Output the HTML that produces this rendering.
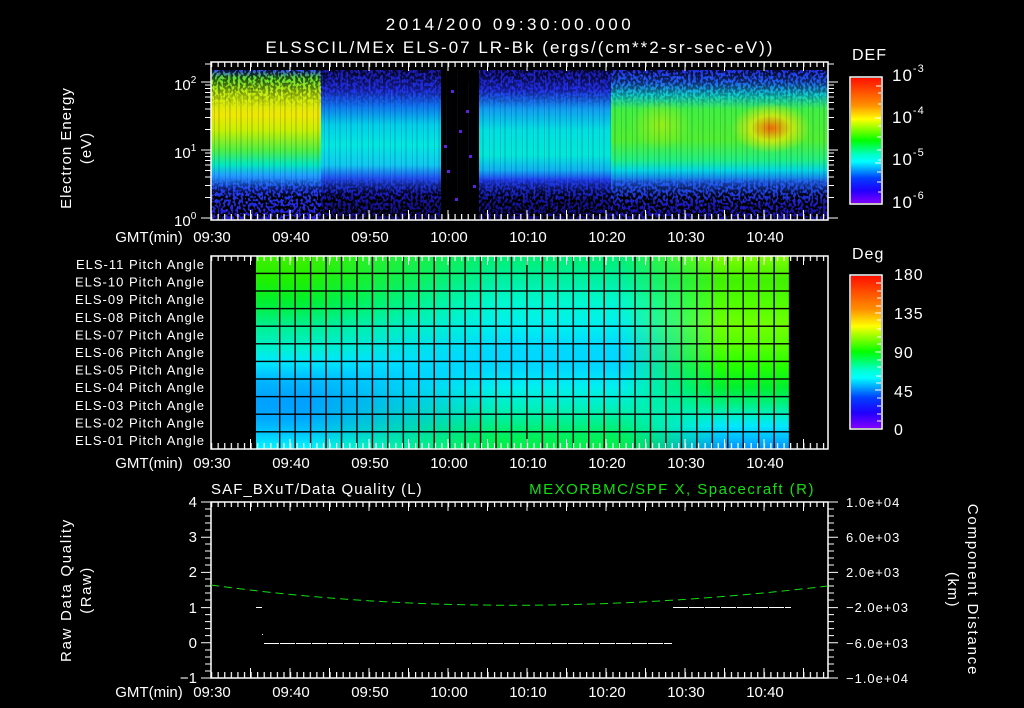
<!DOCTYPE html>
<html><head><meta charset="utf-8"><style>
html,body{margin:0;padding:0;background:#000;width:1024px;height:708px;overflow:hidden;position:relative}
.a{position:absolute}
#spec div{position:absolute;top:0;height:150px}
</style></head><body>

<div id="spec" class="a" style="left:211px;top:70px;width:617px;height:150px;overflow:hidden;background:#1a10b0">
  <div style="left:0;width:110px;background:linear-gradient(#3050ff 0px,#60e030 8px,#c0f010 22px,#f0e800 45px,#c8f000 60px,#50f040 80px,#00e8c0 95px,#20a0ff 105px,#2040f0 120px,#2418d8 150px)"></div>
  <div style="left:110px;width:120px;background:linear-gradient(#1818a8 0px,#2030e8 20px,#1070f0 35px,#00d0e8 55px,#00e8e0 75px,#10c8f0 95px,#2050f0 108px,#1818b0 125px,#100870 150px)"></div>
  <div style="left:230px;width:38px;background:#000"></div>
  <div style="left:268px;width:132px;background:linear-gradient(#1818b0 0px,#2030e8 20px,#10a0f0 40px,#00e0e0 60px,#00e8d8 85px,#10b0f0 100px,#2040f0 110px,#1414a0 130px,#100870 150px)"></div>
  <div style="left:400px;width:217px;background:linear-gradient(#2030e8 0px,#2060f0 12px,#10d0d0 25px,#40f040 40px,#50f030 70px,#20f080 90px,#00d8e0 100px,#2060f0 112px,#1c18c0 135px,#1810a0 150px)"></div>
  <div style="left:480px;width:120px;height:150px;background:radial-gradient(ellipse 40px 25px at 80px 58px,rgba(255,90,0,.9),rgba(250,230,0,.7) 50%,rgba(200,240,0,0) 100%)"></div>
  <div style="left:420px;width:60px;height:150px;background:radial-gradient(ellipse 30px 25px at 30px 55px,rgba(200,240,0,.6),rgba(200,240,0,0) 100%)"></div>
  <div style="left:0;width:617px;height:150px;background:repeating-linear-gradient(90deg,rgba(0,0,0,0) 0 3px,rgba(0,0,40,.15) 3px 4px,rgba(255,255,255,.04) 4px 5px,rgba(0,0,0,0) 5px 7px,rgba(0,0,60,.12) 7px 9px,rgba(0,0,0,0) 9px 11px)"></div>
</div>
<svg class="a" style="left:211px;top:70px" width="617" height="150">
  <filter id="n" x="0" y="0" width="100%" height="100%">
    <feTurbulence type="fractalNoise" baseFrequency="0.4 0.3" numOctaves="1" seed="4"/>
    <feColorMatrix type="matrix" values="0 0 0 0 0  0 0 0 0 0  0 0 0 0 0  0 0 0 -12 6.6"/>
  </filter>
  <linearGradient id="mk" x1="0" y1="0" x2="0" y2="1"><stop offset="0" stop-color="#fff" stop-opacity=".8"/><stop offset=".25" stop-color="#fff" stop-opacity="0"/><stop offset=".72" stop-color="#fff" stop-opacity="0"/><stop offset=".85" stop-color="#fff" stop-opacity="1"/></linearGradient>
  <mask id="m"><rect width="617" height="150" fill="url(#mk)"/></mask>
  <rect width="617" height="150" filter="url(#n)" mask="url(#m)"/>
  <g fill="#6020e0"><rect x="240" y="20" width="3" height="3"/><rect x="248" y="60" width="3" height="3"/><rect x="236" y="100" width="3" height="3"/><rect x="255" y="40" width="3" height="3"/><rect x="244" y="128" width="3" height="3"/><rect x="258" y="85" width="3" height="3"/><rect x="233" y="75" width="3" height="3"/><rect x="262" y="115" width="3" height="3"/></g>
</svg>

<div class="a" style="left:256px;top:256px;width:534px;height:193px;background:linear-gradient(#00f070 0%,#00f0a0 12%,#00f8d0 24%,#00f0f0 36%,#00d8ff 48%,#00d8ff 58%,#00f0f0 68%,#00f0c0 78%,#00f090 86%,#00f060 93%,#00f040 100%)"></div>
<div class="a" style="left:256px;top:256px;width:240px;height:193px;background:linear-gradient(#40f000 0%,#20f000 12%,#00f030 24%,#00f090 36%,#00f0d0 48%,#00e8ff 55%,#00b8ff 64%,#00a0ff 75%,#00a8ff 84%,#00c8ff 92%,#00f8ff 100%);-webkit-mask-image:linear-gradient(90deg,#000 20%,transparent 100%)"></div>
<div class="a" style="left:620px;top:256px;width:170px;height:193px;background:linear-gradient(#80ff00 0%,#40f000 12%,#50ff00 24%,#70ff00 36%,#50ff00 48%,#20ff00 58%,#00f030 68%,#00f070 75%,#00f0c0 82%,#00e8ff 88%,#00c0ff 94%,#0090ff 100%);-webkit-mask-image:linear-gradient(90deg,transparent 0%,#000 60%)"></div>
<svg class="a" style="left:0;top:0" width="1024" height="708">
  <defs>
    <pattern id="gv" x="279" y="0" width="15.45" height="708" patternUnits="userSpaceOnUse"><rect x="0" y="0" width="1.4" height="708" fill="#000"/></pattern>
    <pattern id="gh" x="0" y="272.7" width="1024" height="17.6" patternUnits="userSpaceOnUse"><rect x="0" y="0" width="1024" height="1.4" fill="#000"/></pattern>
  </defs>
  <rect x="279" y="256" width="511" height="193" fill="url(#gv)"/>
  <rect x="256" y="257" width="534" height="191" fill="url(#gh)"/>
</svg>

<svg class="a" style="left:0;top:0" width="1024" height="708" font-family="Liberation Sans, sans-serif" fill="#fff">
  <defs>
    <pattern id="tb" x="211" y="0" width="6.58" height="708" patternUnits="userSpaceOnUse"><rect x="0" y="0" width="1.2" height="708" fill="#fff"/></pattern>
  </defs>
  <text x="510" y="30" font-size="17" letter-spacing="3.5" text-anchor="middle">2014/200 09:30:00.000</text>
  <text x="520" y="53" font-size="17" letter-spacing="2" text-anchor="middle">ELSSCIL/MEx ELS-07 LR-Bk  (ergs/(cm**2-sr-sec-eV))</text>

  <g fill="none" stroke="#fff" stroke-width="1.5">
    <rect x="211" y="62" width="617" height="158"/>
    <rect x="211" y="256" width="617" height="193"/>
    <rect x="211" y="502" width="617" height="176"/>
    <rect x="850" y="77" width="32" height="127"/>
    <rect x="850" y="275" width="32" height="154"/>
  </g>
  <linearGradient id="cb" x1="0" y1="0" x2="0" y2="1"><stop offset="0" stop-color="#ff1000"/><stop offset=".22" stop-color="#ff9000"/><stop offset=".33" stop-color="#ffff00"/><stop offset=".5" stop-color="#00ff00"/><stop offset=".62" stop-color="#00ffd0"/><stop offset=".67" stop-color="#00ffff"/><stop offset=".8" stop-color="#0040ff"/><stop offset=".9" stop-color="#2000ff"/><stop offset="1" stop-color="#8000ff"/></linearGradient>
  <rect x="851" y="78" width="30" height="125" fill="url(#cb)"/>
  <rect x="851" y="276" width="30" height="152" fill="url(#cb)"/>
  <g stroke="#fff" stroke-width="1">
    <path d="M876 86h5M878 93h3M878 104h3M875 118h6M878 126h3M877 137h4M877 150h4M878 160h3M875 163h6M877 172h4M877 182h4M878 192h3"/>
    <path d="M876 283h5M877 291h4M877 298h4M876 306h5M875 313h6M877 320h4M877 329h4M877 337h4M877 344h4M875 352h6M877 360h4M877 367h4M876 376h5M876 383h5M875 390h6M877 398h4M877 406h4M877 414h4M877 421h4"/>
  </g>
  <text x="852" y="60" font-size="16" letter-spacing="1">DEF</text>
  <text x="892" y="81" font-size="17" letter-spacing="1">10<tspan font-size="11" dy="-9">-3</tspan></text>
  <text x="892" y="123" font-size="17" letter-spacing="1">10<tspan font-size="11" dy="-9">-4</tspan></text>
  <text x="892" y="165" font-size="17" letter-spacing="1">10<tspan font-size="11" dy="-9">-5</tspan></text>
  <text x="892" y="208" font-size="17" letter-spacing="1">10<tspan font-size="11" dy="-9">-6</tspan></text>
  <text x="852" y="259" font-size="16" letter-spacing="1">Deg</text>
  <g font-size="16" letter-spacing="1"><text x="894" y="280">180</text><text x="894" y="319">135</text><text x="894" y="358">90</text><text x="894" y="397">45</text><text x="894" y="435">0</text></g>

  <rect x="211" y="62" width="617" height="5" fill="url(#tb)"/>
  <rect x="211" y="214" width="617" height="6" fill="url(#tb)"/>
  <rect x="211" y="256" width="617" height="5" fill="url(#tb)"/>
  <rect x="211" y="443" width="617" height="6" fill="url(#tb)"/>
  <rect x="211" y="502" width="617" height="5" fill="url(#tb)"/>
  <rect x="211" y="672" width="617" height="6" fill="url(#tb)"/>
  <g stroke="#fff" stroke-width="1">
    <path d="M250.5 62v9M290 62v9M329.5 62v9M369 62v9M408.5 62v9M448 62v9M487.5 62v9M527 62v9M566.5 62v9M606 62v9M645.5 62v9M685 62v9M724.5 62v9M764 62v9M803.5 62v9"/>
    <path d="M250.5 220v-10M290 220v-10M329.5 220v-10M369 220v-10M408.5 220v-10M448 220v-10M487.5 220v-10M527 220v-10M566.5 220v-10M606 220v-10M645.5 220v-10M685 220v-10M724.5 220v-10M764 220v-10M803.5 220v-10"/>
    <path d="M250.5 256v9M290 256v9M329.5 256v9M369 256v9M408.5 256v9M448 256v9M487.5 256v9M527 256v9M566.5 256v9M606 256v9M645.5 256v9M685 256v9M724.5 256v9M764 256v9M803.5 256v9"/>
    <path d="M250.5 449v-10M290 449v-10M329.5 449v-10M369 449v-10M408.5 449v-10M448 449v-10M487.5 449v-10M527 449v-10M566.5 449v-10M606 449v-10M645.5 449v-10M685 449v-10M724.5 449v-10M764 449v-10M803.5 449v-10"/>
    <path d="M250.5 502v9M290 502v9M329.5 502v9M369 502v9M408.5 502v9M448 502v9M487.5 502v9M527 502v9M566.5 502v9M606 502v9M645.5 502v9M685 502v9M724.5 502v9M764 502v9M803.5 502v9"/>
    <path d="M250.5 678v-10M290 678v-10M329.5 678v-10M369 678v-10M408.5 678v-10M448 678v-10M487.5 678v-10M527 678v-10M566.5 678v-10M606 678v-10M645.5 678v-10M685 678v-10M724.5 678v-10M764 678v-10M803.5 678v-10"/>
    <path d="M201 82h10M201 150h10M201 218h10M205 197.5h6M205 185.5h6M205 177h6M205 170.5h6M205 165h6M205 160.5h6M205 156.5h6M205 153h6M205 129.5h6M205 117.5h6M205 109h6M205 102.5h6M205 97h6M205 92.5h6M205 88.5h6M205 85h6M205 64h6"/>
    <path d="M828 82h10M828 150h10M828 218h10M828 197.5h6M828 185.5h6M828 177h6M828 170.5h6M828 165h6M828 160.5h6M828 156.5h6M828 153h6M828 129.5h6M828 117.5h6M828 109h6M828 102.5h6M828 97h6M828 92.5h6M828 88.5h6M828 85h6M828 64h6"/>
    <path d="M201 502h10M201 537.2h10M201 572.4h10M201 607.6h10M201 642.8h10M201 678h10M205 509h6M205 516h6M205 523h6M205 530h6M205 544h6M205 551h6M205 558h6M205 565h6M205 579h6M205 586h6M205 593h6M205 600h6M205 614.6h6M205 621.6h6M205 628.6h6M205 635.6h6M205 650h6M205 657h6M205 664h6M205 671h6"/>
    <path d="M828 502h10M828 537.2h10M828 572.4h10M828 607.6h10M828 642.8h10M828 678h10M828 509h6M828 516h6M828 523h6M828 530h6M828 544h6M828 551h6M828 558h6M828 565h6M828 579h6M828 586h6M828 593h6M828 600h6M828 614.6h6M828 621.6h6M828 628.6h6M828 635.6h6M828 650h6M828 657h6M828 664h6M828 671h6"/>
  </g>

  <text x="174" y="90" font-size="15">10<tspan font-size="10" dy="-7">2</tspan></text>
  <text x="174" y="158" font-size="15">10<tspan font-size="10" dy="-7">1</tspan></text>
  <text x="174" y="226" font-size="15">10<tspan font-size="10" dy="-7">0</tspan></text>
  <text transform="translate(71,148) rotate(-90)" font-size="15" letter-spacing="1" text-anchor="middle">Electron Energy</text>
  <text transform="translate(91,148) rotate(-90)" font-size="15" letter-spacing="1" text-anchor="middle">(eV)</text>

  <g font-size="15" text-anchor="middle">
    <text x="149" y="242">GMT(min)</text><text x="212" y="242">09:30</text><text x="291" y="242">09:40</text><text x="370" y="242">09:50</text><text x="449" y="242">10:00</text><text x="528" y="242">10:10</text><text x="607" y="242">10:20</text><text x="686" y="242">10:30</text><text x="765" y="242">10:40</text>
    <text x="149" y="468">GMT(min)</text><text x="212" y="468">09:30</text><text x="291" y="468">09:40</text><text x="370" y="468">09:50</text><text x="449" y="468">10:00</text><text x="528" y="468">10:10</text><text x="607" y="468">10:20</text><text x="686" y="468">10:30</text><text x="765" y="468">10:40</text>
    <text x="149" y="697">GMT(min)</text><text x="212" y="697">09:30</text><text x="291" y="697">09:40</text><text x="370" y="697">09:50</text><text x="449" y="697">10:00</text><text x="528" y="697">10:10</text><text x="607" y="697">10:20</text><text x="686" y="697">10:30</text><text x="765" y="697">10:40</text>
  </g>

  <g font-size="13" letter-spacing="1" text-anchor="end">
    <text x="205" y="269">ELS-11 Pitch Angle</text><text x="205" y="286.6">ELS-10 Pitch Angle</text><text x="205" y="304.2">ELS-09 Pitch Angle</text><text x="205" y="321.8">ELS-08 Pitch Angle</text><text x="205" y="339.4">ELS-07 Pitch Angle</text><text x="205" y="357">ELS-06 Pitch Angle</text><text x="205" y="374.6">ELS-05 Pitch Angle</text><text x="205" y="392.2">ELS-04 Pitch Angle</text><text x="205" y="409.8">ELS-03 Pitch Angle</text><text x="205" y="427.4">ELS-02 Pitch Angle</text><text x="205" y="445">ELS-01 Pitch Angle</text>
  </g>

  <text x="211" y="494" font-size="15" letter-spacing="1.1">SAF_BXuT/Data Quality (L)</text>
  <text x="815" y="494" font-size="15" letter-spacing="1.5" fill="#10e010" text-anchor="end">MEXORBMC/SPF X, Spacecraft (R)</text>
  <g font-size="15" text-anchor="end"><text x="197" y="507">4</text><text x="197" y="542">3</text><text x="197" y="577">2</text><text x="197" y="613">1</text><text x="197" y="648">0</text><text x="197" y="683">−1</text></g>
  <g font-size="13" letter-spacing="1"><text x="846" y="507">1.0e+04</text><text x="846" y="542">6.0e+03</text><text x="846" y="577">2.0e+03</text><text x="846" y="612">−2.0e+03</text><text x="846" y="648">−6.0e+03</text><text x="846" y="683">−1.0e+04</text></g>
  <text transform="translate(71,590) rotate(-90)" font-size="15" letter-spacing="1.7" text-anchor="middle">Raw Data Quality</text>
  <text transform="translate(91,590) rotate(-90)" font-size="15" letter-spacing="1.5" text-anchor="middle">(Raw)</text>
  <text transform="translate(968,590) rotate(90)" font-size="15" letter-spacing="1.8" text-anchor="middle">Component Distance</text>
  <text transform="translate(948,590) rotate(90)" font-size="15" letter-spacing="1.5" text-anchor="middle">(km)</text>
  <path d="M211 585 Q500 625 828 586" fill="none" stroke="#10e010" stroke-width="1" stroke-dasharray="8 5"/>
  <g stroke="#fff" stroke-width="1">
    <path d="M256 607.5h6"/><path d="M262 634.5h1"/>
    <path d="M264 643.5H672" stroke-dasharray="15 1"/>
    <path d="M673 607.5H791" stroke-dasharray="15 1"/>
  </g>
</svg>
</body></html>
